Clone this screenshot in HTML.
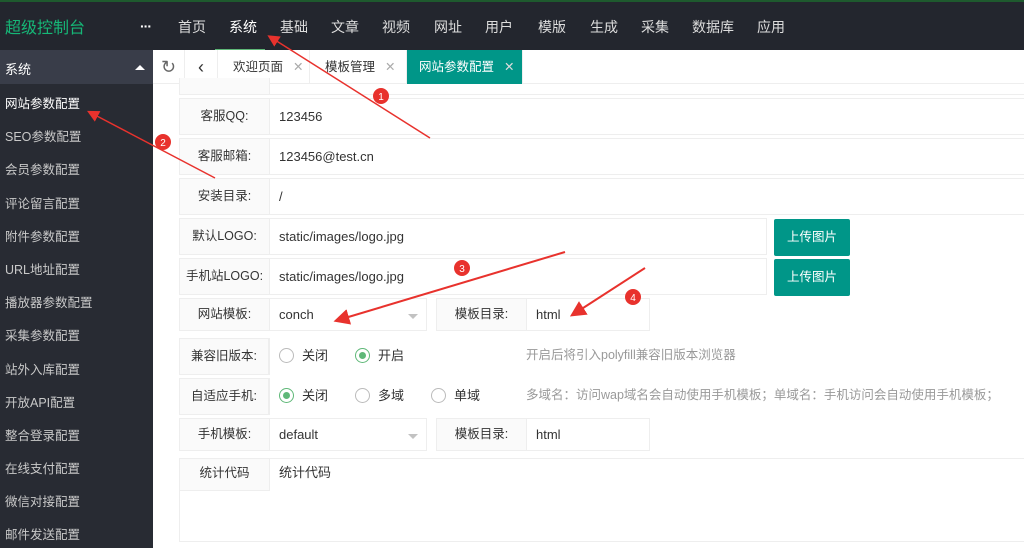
<!DOCTYPE html>
<html><head><meta charset="utf-8"><style>
*{box-sizing:border-box;margin:0;padding:0}
body{width:1024px;height:548px;overflow:hidden;background:#fff;font-family:"Liberation Sans","Noto Sans CJK SC",sans-serif;font-size:13px;color:#333;position:relative}
.hdr{position:absolute;left:0;top:0;width:1024px;height:50px;background:#23262e;border-top:2px solid #1e5a2e}
.logo{position:absolute;left:5px;top:12px;color:#16b777;font-size:16px}
.dots{position:absolute;left:140px;top:16px;color:#fff;font-size:14px;font-weight:bold;letter-spacing:-1px}
.nav{position:absolute;top:15px;color:#ddd;font-size:14px}
.nav.on{color:#fff}
.navbar{position:absolute;left:215px;top:47px;width:50px;height:3px;background:#5fb878}
.side{position:absolute;left:0;top:50px;width:153px;height:498px;background:#282b33}
.shead{height:34px;background:#393d49;color:#fff;padding:9px 5px;font-size:13px;position:relative}
.shead:after{content:"";position:absolute;right:8px;top:15px;border:5px solid transparent;border-bottom:5px solid #fff;border-top:0}
.list{padding-top:4px}
.si{height:33.2px;line-height:33px;padding-left:5px;color:#c9c9c9;font-size:12.5px}
.si.on{color:#fff}
.tabs{position:absolute;left:153px;top:50px;width:871px;height:34px;background:#fff;border-bottom:1px solid #eee}
.tab{position:absolute;top:0;height:34px;line-height:34px;border-right:1px solid #eee;font-size:12.5px}
.x{color:#aaa;margin-left:10px}
.row{position:absolute;height:37px;border:1px solid #eee;display:flex}
.lab{width:90px;background:#fafafa;border-right:1px solid #eee;text-align:center;line-height:35px;font-size:12.5px}
.val{flex:1;padding-left:9px;line-height:35px;font-size:13px}
.btn{position:absolute;left:774px;width:76px;height:37px;background:#009688;color:#fff;text-align:center;line-height:37px;font-size:12.5px;border-radius:2px}
.rad{display:inline-block;width:15px;height:15px;border:1px solid #bbb;border-radius:50%;vertical-align:-3px;margin-right:8px;position:relative}
.rad.on{border-color:#5fb878}
.rad.on:after{content:"";position:absolute;left:3px;top:3px;width:7px;height:7px;border-radius:50%;background:#5fb878}
.opt{position:absolute;top:0;line-height:35px}
.tip{position:absolute;color:#999;font-size:12.5px;line-height:35px;top:0}
.caret{position:absolute;right:8px;top:15px;border:5px solid transparent;border-top:5px solid #c2c2c2}
</style></head><body>
<div class="hdr">
<div class="logo">超级控制台</div><div class="dots">···</div>
<div class="nav" style="left:178px">首页</div><div class="nav on" style="left:229px">系统</div><div class="nav" style="left:280px">基础</div><div class="nav" style="left:331px">文章</div><div class="nav" style="left:382px">视频</div><div class="nav" style="left:434px">网址</div><div class="nav" style="left:485px">用户</div><div class="nav" style="left:538px">模版</div><div class="nav" style="left:590px">生成</div><div class="nav" style="left:641px">采集</div><div class="nav" style="left:692px">数据库</div><div class="nav" style="left:757px">应用</div>
<div class="navbar"></div>
</div>
<div class="side"><div class="shead">系统</div>
<div class="list">
<div class="si on">网站参数配置</div><div class="si">SEO参数配置</div><div class="si">会员参数配置</div><div class="si">评论留言配置</div><div class="si">附件参数配置</div><div class="si">URL地址配置</div><div class="si">播放器参数配置</div><div class="si">采集参数配置</div><div class="si">站外入库配置</div><div class="si">开放API配置</div><div class="si">整合登录配置</div><div class="si">在线支付配置</div><div class="si">微信对接配置</div><div class="si">邮件发送配置</div>
</div></div>
<div class="tabs">
<div class="tab" style="left:0;width:32px;text-align:center;font-size:18px;color:#666">↻</div>
<div class="tab" style="left:32px;width:33px;text-align:center;font-size:18px;color:#333">‹</div>
<div class="tab" style="left:65px;width:92px;padding-left:15px">欢迎页面<span class="x">✕</span></div>
<div class="tab" style="left:157px;width:97px;padding-left:15px">模板管理<span class="x">✕</span></div>
<div class="tab" style="left:254px;width:116px;padding-left:12px;background:#009688;color:#fff">网站参数配置<span class="x" style="color:#ddd">✕</span></div>
</div>
<div class="row" style="left:179px;top:78px;width:860px;height:17px;border-top:0"><div class="lab"></div></div>
<div class="row" style="left:179px;top:98px;width:860px"><div class="lab">客服QQ:</div><div class="val">123456</div></div>
<div class="row" style="left:179px;top:138px;width:860px"><div class="lab">客服邮箱:</div><div class="val">123456@test.cn</div></div>
<div class="row" style="left:179px;top:178px;width:860px"><div class="lab">安装目录:</div><div class="val">/</div></div>
<div class="row" style="left:179px;top:218px;width:588px"><div class="lab">默认LOGO:</div><div class="val">static/images/logo.jpg</div></div>
<div class="btn" style="top:219px">上传图片</div>
<div class="row" style="left:179px;top:258px;width:588px"><div class="lab">手机站LOGO:</div><div class="val">static/images/logo.jpg</div></div>
<div class="btn" style="top:259px">上传图片</div>
<div class="row" style="left:179px;top:298px;width:248px;height:33px"><div class="lab" style="line-height:31px">网站模板:</div><div class="val" style="line-height:31px;position:relative">conch<span class="caret"></span></div></div>
<div class="row" style="left:436px;top:298px;width:214px;height:33px"><div class="lab" style="line-height:31px">模板目录:</div><div class="val" style="line-height:31px">html</div></div>
<div class="row" style="left:179px;top:338px;width:91px"><div class="lab">兼容旧版本:</div></div>
<div style="position:absolute;left:279px;top:338px;height:37px;width:700px">
<div class="opt" style="left:0"><span class="rad"></span>关闭</div><div class="opt" style="left:76px"><span class="rad on"></span>开启</div>
<div class="tip" style="left:247px">开启后将引入polyfill兼容旧版本浏览器</div></div>
<div class="row" style="left:179px;top:378px;width:91px"><div class="lab">自适应手机:</div></div>
<div style="position:absolute;left:279px;top:378px;height:37px;width:745px">
<div class="opt" style="left:0"><span class="rad on"></span>关闭</div><div class="opt" style="left:76px"><span class="rad"></span>多域</div><div class="opt" style="left:152px"><span class="rad"></span>单域</div>
<div class="tip" style="left:247px;white-space:nowrap">多域名：访问wap域名会自动使用手机模板；单域名：手机访问会自动使用手机模板；</div></div>
<div class="row" style="left:179px;top:418px;width:248px;height:33px"><div class="lab" style="line-height:31px">手机模板:</div><div class="val" style="line-height:31px;position:relative">default<span class="caret"></span></div></div>
<div class="row" style="left:436px;top:418px;width:214px;height:33px"><div class="lab" style="line-height:31px">模板目录:</div><div class="val" style="line-height:31px">html</div></div>
<div class="row" style="left:179px;top:458px;width:860px;height:84px"><div class="lab" style="line-height:28px;height:32px;border-bottom:1px solid #eee">统计代码</div><div class="val" style="line-height:28px">统计代码</div></div>
<svg style="position:absolute;left:0;top:0" width="1024" height="548">
<defs><marker id="a" markerWidth="8" markerHeight="8" refX="2" refY="4" orient="auto"><path d="M0,0 L8,4 L0,8 z" fill="#e8322d"/></marker></defs>
<g stroke="#e8322d" fill="none">
<path d="M430,138 L275,40" stroke-width="1.5" marker-end="url(#a)"/>
<path d="M215,178 L95,115" stroke-width="1.5" marker-end="url(#a)"/>
<path d="M565,252 L345,318" stroke-width="2" marker-end="url(#a)"/>
<path d="M645,268 L580,310" stroke-width="2" marker-end="url(#a)"/>
</g>
<g fill="#e8322d"><circle cx="381" cy="96" r="8"/><circle cx="163" cy="142" r="8"/><circle cx="462" cy="268" r="8"/><circle cx="633" cy="297" r="8"/></g>
<g fill="#fff" font-size="10" text-anchor="middle" font-family="Liberation Sans"><text x="381" y="100">1</text><text x="163" y="146">2</text><text x="462" y="272">3</text><text x="633" y="301">4</text></g>
</svg>
</body></html>
